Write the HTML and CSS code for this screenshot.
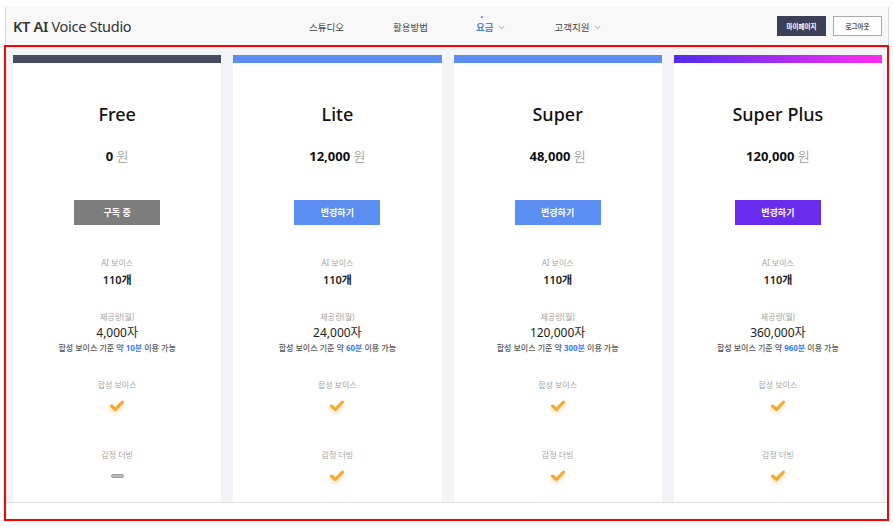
FILE: index.html
```html
<!DOCTYPE html>
<html lang="ko">
<head>
<meta charset="utf-8">
<title>KT AI Voice Studio - 요금</title>
<link rel="stylesheet" href="styles.css">
</head>
<body>
<div class="screen">
  <header class="header">
    <div class="logo"><b>KT AI</b> Voice Studio</div>
    <nav class="nav">
      <span class="nav-item n1">스튜디오</span>
      <span class="nav-item n2">활용방법</span>
      <span class="nav-item n3 active">요금<svg class="chev" viewBox="0 0 8 5"><polyline points="1,1 4,4 7,1"/></svg></span>
      <span class="nav-item n4">고객지원<svg class="chev" viewBox="0 0 8 5"><polyline points="1,1 4,4 7,1"/></svg></span>
    </nav>
    <div class="actions">
      <span class="btn-my">마이페이지</span>
      <span class="btn-out">로그아웃</span>
    </div>
  </header>
</div>
<main class="main">
  <section class="plans">
    <div class="card">
      <div class="bar bar-free"></div>
      <div class="title">Free</div>
      <div class="price"><b>0</b> <span class="won">원</span></div>
      <div class="cta cta-free">구독 중</div>
      <div class="lbl l1">AI 보이스</div>
      <div class="val">110개</div>
      <div class="lbl l2">제공량(월)</div>
      <div class="amount">4,000자</div>
      <div class="note">합성 보이스 기준 약 <b>10분</b> 이용 가능</div>
      <div class="lbl l3">합성 보이스</div>
      <svg class="check" viewBox="0 0 16 14"><polyline points="2.5,7 6.5,10.5 13.5,3"/></svg>
      <div class="lbl l4">감정 더빙</div>
      <div class="dash-wrap"><span class="dash"></span></div>
    </div>
    <div class="card">
      <div class="bar bar-blue"></div>
      <div class="title">Lite</div>
      <div class="price"><b>12,000</b> <span class="won">원</span></div>
      <div class="cta cta-blue">변경하기</div>
      <div class="lbl l1">AI 보이스</div>
      <div class="val">110개</div>
      <div class="lbl l2">제공량(월)</div>
      <div class="amount">24,000자</div>
      <div class="note">합성 보이스 기준 약 <b>60분</b> 이용 가능</div>
      <div class="lbl l3">합성 보이스</div>
      <svg class="check" viewBox="0 0 16 14"><polyline points="2.5,7 6.5,10.5 13.5,3"/></svg>
      <div class="lbl l4">감정 더빙</div>
      <svg class="check" viewBox="0 0 16 14"><polyline points="2.5,7 6.5,10.5 13.5,3"/></svg>
    </div>
    <div class="card">
      <div class="bar bar-blue"></div>
      <div class="title">Super</div>
      <div class="price"><b>48,000</b> <span class="won">원</span></div>
      <div class="cta cta-blue">변경하기</div>
      <div class="lbl l1">AI 보이스</div>
      <div class="val">110개</div>
      <div class="lbl l2">제공량(월)</div>
      <div class="amount">120,000자</div>
      <div class="note">합성 보이스 기준 약 <b>300분</b> 이용 가능</div>
      <div class="lbl l3">합성 보이스</div>
      <svg class="check" viewBox="0 0 16 14"><polyline points="2.5,7 6.5,10.5 13.5,3"/></svg>
      <div class="lbl l4">감정 더빙</div>
      <svg class="check" viewBox="0 0 16 14"><polyline points="2.5,7 6.5,10.5 13.5,3"/></svg>
    </div>
    <div class="card">
      <div class="bar bar-grad"></div>
      <div class="title">Super Plus</div>
      <div class="price"><b>120,000</b> <span class="won">원</span></div>
      <div class="cta cta-purple">변경하기</div>
      <div class="lbl l1">AI 보이스</div>
      <div class="val">110개</div>
      <div class="lbl l2">제공량(월)</div>
      <div class="amount">360,000자</div>
      <div class="note">합성 보이스 기준 약 <b>960분</b> 이용 가능</div>
      <div class="lbl l3">합성 보이스</div>
      <svg class="check" viewBox="0 0 16 14"><polyline points="2.5,7 6.5,10.5 13.5,3"/></svg>
      <div class="lbl l4">감정 더빙</div>
      <svg class="check" viewBox="0 0 16 14"><polyline points="2.5,7 6.5,10.5 13.5,3"/></svg>
    </div>
  </section>
  <div class="foot"></div>
</main>
</body>
</html>
```

FILE: styles.css
```css
* { box-sizing: border-box; }
html, body { margin: 0; padding: 0; }
body {
  width: 893px;
  height: 526px;
  overflow: hidden;
  background: #ffffff;
  font-family: "Noto Sans", "Noto Sans CJK KR", sans-serif;
  color: #222;
}
.screen {
  margin: 7px 4px 0 5px;
  border-left: 1px solid #d8d8d8;
  border-right: 1px solid #d8d8d8;
}
.header {
  height: 38px;
  background: #f8f8f8;
  display: flex;
  align-items: center;
  padding: 0 6px 0 7px;
}
.logo {
  font-size: 14.5px;
  color: #333;
  letter-spacing: -0.3px;
  width: 296px;
}
.logo b { font-weight: 600; }
.nav {
  display: flex;
  align-items: center;
  flex: 1;
  font-size: 9.5px;
  color: #444;
  padding-top: 2px;
}
.nav-item { display: inline-flex; align-items: center; position: relative; }
.n1 { margin-left: 0; }
.n2 { margin-left: 49px; }
.n3 { margin-left: 48px; }
.n4 { margin-left: 49px; }
.active { color: #4a7fe8; font-weight: 600; }
.active::before {
  content: "";
  position: absolute;
  top: -4px;
  left: 5px;
  width: 2px;
  height: 2px;
  border-radius: 50%;
  background: #4a7fe8;
}
.chev { width: 7px; height: 5px; margin-left: 5px; fill: none; stroke: #999; stroke-width: 1; }
.actions { display: flex; gap: 7px; }
.btn-my, .btn-out {
  width: 49px;
  height: 20px;
  font-size: 6.5px;
  font-weight: 700;
  display: flex;
  align-items: center;
  justify-content: center;
}
.btn-my { background: #3b3f58; color: #fff; }
.btn-out { background: #fff; color: #555; border: 1px solid #aaa; }

.main {
  margin: 0 4px 0 4px;
  height: 476px;
  border: 2px solid #ff0000;
  background: #fff;
  display: flex;
  flex-direction: column;
}
.plans {
  background: #f3f4f7;
  display: grid;
  grid-template-columns: repeat(4, 1fr);
  gap: 12px;
  padding: 8px 5px 0 7px;
  height: 456px;
  border-bottom: 1px solid #ddd;
}
.card {
  background: #fff;
  display: flex;
  flex-direction: column;
  align-items: center;
  text-align: center;
}
.bar { width: 100%; height: 8px; }
.bar-free { background: #474b64; }
.bar-blue { background: #5b8ef2; }
.bar-grad { background: linear-gradient(90deg, #4f2cf0, #ff2cf0); }
.title {
  margin-top: 39px;
  font-size: 18px;
  line-height: 24px;
  font-weight: 500;
  color: #111;
}
.price {
  margin-top: 22px;
  font-size: 13px;
  line-height: 16px;
}
.price b { font-weight: 700; color: #111; }
.won { color: #aaa; font-weight: 400; }
.cta {
  margin-top: 36px;
  width: 86px;
  height: 25px;
  color: #fff;
  font-size: 9px;
  font-weight: 700;
  display: flex;
  align-items: center;
  justify-content: center;
}
.cta-free { background: #7d7d7d; }
.cta-blue { background: #5b8ef2; }
.cta-purple { background: #6a2bef; }
.lbl {
  font-size: 8px;
  line-height: 12px;
  color: #a5a5a5;
}
.l1 { margin-top: 32px; }
.l2 { margin-top: 24px; }
.l3 { margin-top: 25px; }
.l4 { margin-top: 36px; }
.val {
  margin-top: 4px;
  font-size: 11px;
  line-height: 14px;
  font-weight: 600;
  color: #222;
}
.amount {
  margin-top: 2px;
  font-size: 12px;
  line-height: 16px;
  font-weight: 400;
  color: #222;
}
.note {
  margin-top: 1px;
  font-size: 8px;
  line-height: 12px;
  color: #555;
  font-weight: 500;
}
.note b { color: #3b7bff; font-weight: 700; }
.check {
  margin-top: 8px;
  width: 16px;
  height: 14px;
  fill: none;
  stroke: #f7a82a;
  stroke-width: 3;
  stroke-linecap: round;
  stroke-linejoin: round;
  filter: drop-shadow(0 2px 2px rgba(247, 168, 42, 0.45));
}
.dash-wrap {
  margin-top: 8px;
  height: 14px;
  display: flex;
  align-items: center;
}
.dash {
  width: 13px;
  height: 4px;
  border-radius: 2px;
  background: #b8b8b8;
  border: 1px solid #a0a0a0;
}
.foot { flex: 1; background: #fff; }
```
